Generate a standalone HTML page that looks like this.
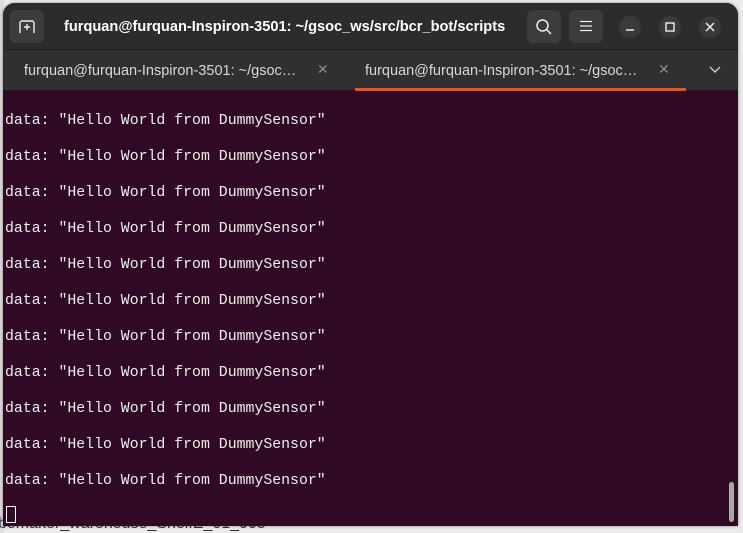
<!DOCTYPE html>
<html><head><style>
*{margin:0;padding:0;box-sizing:border-box}
body{width:743px;height:533px;overflow:hidden;background:#ebebeb;position:relative;font-family:"Liberation Sans",sans-serif}
.bg-left{position:absolute;left:0;top:0;width:4px;height:533px;background:#dcdcdc}
.bgtext{position:absolute;left:-2px;top:515px;font:16px "Liberation Sans",sans-serif;color:#333;white-space:nowrap}
.win{position:absolute;left:3px;top:3px;width:735px;height:523px;border-radius:12px 12px 0 0;overflow:hidden;background:#300a24;box-shadow:0 0 3px rgba(0,0,0,.4)}
.title{position:absolute;left:0;top:0;width:100%;height:47px;background:#2c2c2c;border-bottom:1px solid #1f1f1f}
.tabs{position:absolute;left:0;top:47px;width:100%;height:40px;background:#303030}
.btn{position:absolute;background:#3c3c3c;border-radius:6px}
.circ{position:absolute;width:22px;height:22px;border-radius:50%;background:#3a3a3a;top:13px}
.ttl{position:absolute;left:61px;top:16px;color:#fff;font-weight:bold;font-size:14.6px;white-space:nowrap}
.tab{position:absolute;top:60px;color:#d8d8d8;font-size:14.5px;white-space:nowrap}
.x{position:absolute;top:58px;color:#8a8a8a;font-size:14px}
.under{position:absolute;left:352px;top:85px;width:331px;height:3px;background:#e95420}
.term{position:absolute;left:2px;top:88px;font-family:"Liberation Mono",monospace;font-size:14.85px;color:#eee;line-height:36px;white-space:pre;padding-top:12px}
.cur{position:absolute;left:3px;top:503px;width:10px;height:17px;border:1px solid #fff}
.sb{position:absolute;left:726px;top:479px;width:5px;height:40px;border-radius:3px;background:#a9a9a9}
</style></head><body>
<div class="bg-left"></div>
<div class="bgtext">bomaker_warehouse_ShelfE_01_005</div>
<div class="win">
 <div class="title"></div>
 <div class="tabs"></div>
 <div class="btn" style="left:7px;top:7px;width:34px;height:33px;"></div>
 <svg style="position:absolute;left:16px;top:17px" width="16" height="14" viewBox="0 0 16 14"><path d="M1 13V3a2 2 0 0 1 2-2h10a2 2 0 0 1 2 2v10M8 4v6M5 7h6" stroke="#eee" stroke-width="1.4" fill="none"/></svg>
 <div class="ttl">furquan@furquan-Inspiron-3501: ~/gsoc_ws/src/bcr_bot/scripts</div>
 <div class="btn" style="left:524px;top:7px;width:34px;height:33px;"></div>
 <svg style="position:absolute;left:532px;top:15px" width="18" height="18" viewBox="0 0 18 18"><circle cx="7.5" cy="7.5" r="5.5" stroke="#eee" stroke-width="1.5" fill="none"/><path d="M11.5 11.5L16 16" stroke="#eee" stroke-width="1.5"/></svg>
 <div class="btn" style="left:566px;top:7px;width:34px;height:33px;"></div>
 <svg style="position:absolute;left:577px;top:17px" width="12" height="12" viewBox="0 0 12 12"><path d="M0 1.5h12M0 6h12M0 10.5h12" stroke="#eee" stroke-width="1.3"/></svg>
 <div class="circ" style="left:616px"></div><svg style="position:absolute;left:622px;top:19px" width="10" height="10"><path d="M1 8h8" stroke="#eee" stroke-width="1.5"/></svg>
 <div class="circ" style="left:656px"></div><svg style="position:absolute;left:662px;top:19px" width="10" height="10"><rect x="1" y="1" width="8" height="8" stroke="#eee" stroke-width="1.4" fill="none"/></svg>
 <div class="circ" style="left:696px"></div><svg style="position:absolute;left:702px;top:19px" width="10" height="10"><path d="M1 1l8 8M9 1l-8 8" stroke="#eee" stroke-width="1.5"/></svg>
 <div class="tab" style="left:21px">furquan@furquan-Inspiron-3501: ~/gsoc…</div>
 <div class="x" style="left:314px">✕</div>
 <div class="tab" style="left:362px">furquan@furquan-Inspiron-3501: ~/gsoc…</div>
 <div class="x" style="left:655px">✕</div>
 <svg style="position:absolute;left:706px;top:63px" width="12" height="8"><path d="M1 1l5 5 5-5" stroke="#ccc" stroke-width="1.4" fill="none"/></svg>
 <div class="under"></div>
 <div class="term">data: "Hello World from DummySensor"
data: "Hello World from DummySensor"
data: "Hello World from DummySensor"
data: "Hello World from DummySensor"
data: "Hello World from DummySensor"
data: "Hello World from DummySensor"
data: "Hello World from DummySensor"
data: "Hello World from DummySensor"
data: "Hello World from DummySensor"
data: "Hello World from DummySensor"
data: "Hello World from DummySensor"</div>
 <div class="cur"></div>
 <div class="sb"></div>
</div>
</body></html>
